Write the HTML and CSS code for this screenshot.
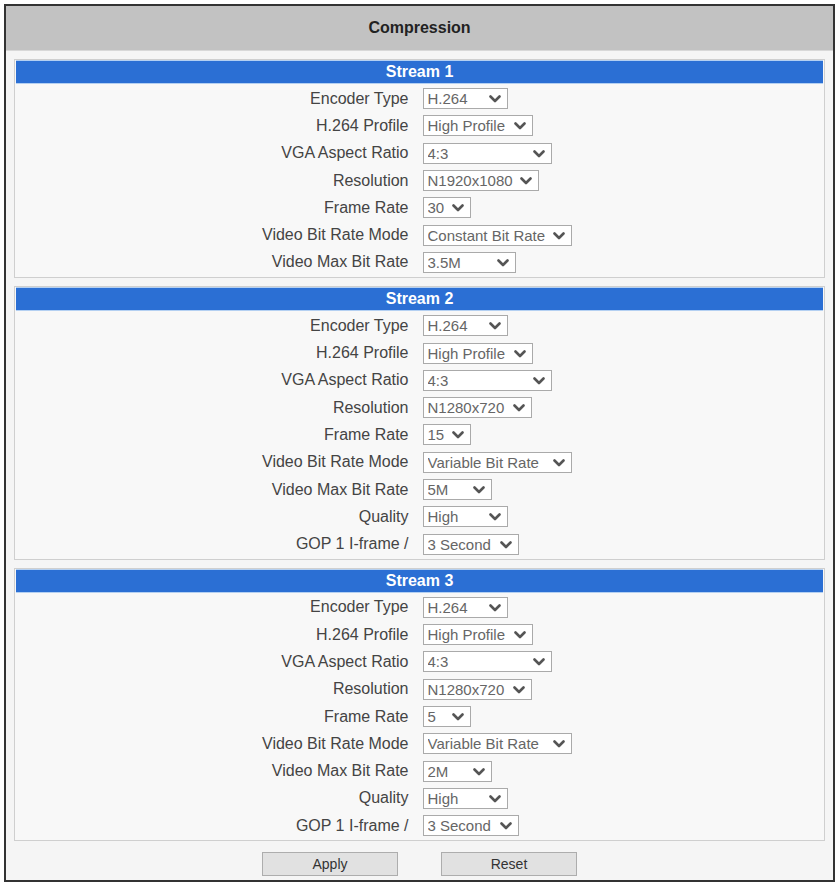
FILE: index.html
```html
<!DOCTYPE html>
<html lang="en">
<head>
    <meta charset="UTF-8">
    <title>Compression</title>
    <link rel="stylesheet" href="styles.css">
</head>
<body>
    <div class="panel">
        <div class="panel-title">Compression</div>
        <div class="panel-body">

            <div class="stream">
                <div class="stream-head">Stream 1</div>
                <div class="rows">
                    <div class="label">Encoder Type</div>
                    <div class="cell"><div class="select w85"><span>H.264</span><svg viewBox="0 0 12 8"><path d="M1.5 1.5 6 6 10.5 1.5"/></svg></div></div>
                    <div class="label">H.264 Profile</div>
                    <div class="cell"><div class="select w110"><span>High Profile</span><svg viewBox="0 0 12 8"><path d="M1.5 1.5 6 6 10.5 1.5"/></svg></div></div>
                    <div class="label">VGA Aspect Ratio</div>
                    <div class="cell"><div class="select w129"><span>4:3</span><svg viewBox="0 0 12 8"><path d="M1.5 1.5 6 6 10.5 1.5"/></svg></div></div>
                    <div class="label">Resolution</div>
                    <div class="cell"><div class="select w116"><span>N1920x1080</span><svg viewBox="0 0 12 8"><path d="M1.5 1.5 6 6 10.5 1.5"/></svg></div></div>
                    <div class="label">Frame Rate</div>
                    <div class="cell"><div class="select w48"><span>30</span><svg viewBox="0 0 12 8"><path d="M1.5 1.5 6 6 10.5 1.5"/></svg></div></div>
                    <div class="label">Video Bit Rate Mode</div>
                    <div class="cell"><div class="select w149"><span>Constant Bit Rate</span><svg viewBox="0 0 12 8"><path d="M1.5 1.5 6 6 10.5 1.5"/></svg></div></div>
                    <div class="label">Video Max Bit Rate</div>
                    <div class="cell"><div class="select w93"><span>3.5M</span><svg viewBox="0 0 12 8"><path d="M1.5 1.5 6 6 10.5 1.5"/></svg></div></div>
                </div>
            </div>

            <div class="stream">
                <div class="stream-head">Stream 2</div>
                <div class="rows">
                    <div class="label">Encoder Type</div>
                    <div class="cell"><div class="select w85"><span>H.264</span><svg viewBox="0 0 12 8"><path d="M1.5 1.5 6 6 10.5 1.5"/></svg></div></div>
                    <div class="label">H.264 Profile</div>
                    <div class="cell"><div class="select w110"><span>High Profile</span><svg viewBox="0 0 12 8"><path d="M1.5 1.5 6 6 10.5 1.5"/></svg></div></div>
                    <div class="label">VGA Aspect Ratio</div>
                    <div class="cell"><div class="select w129"><span>4:3</span><svg viewBox="0 0 12 8"><path d="M1.5 1.5 6 6 10.5 1.5"/></svg></div></div>
                    <div class="label">Resolution</div>
                    <div class="cell"><div class="select w109"><span>N1280x720</span><svg viewBox="0 0 12 8"><path d="M1.5 1.5 6 6 10.5 1.5"/></svg></div></div>
                    <div class="label">Frame Rate</div>
                    <div class="cell"><div class="select w48"><span>15</span><svg viewBox="0 0 12 8"><path d="M1.5 1.5 6 6 10.5 1.5"/></svg></div></div>
                    <div class="label">Video Bit Rate Mode</div>
                    <div class="cell"><div class="select w149"><span>Variable Bit Rate</span><svg viewBox="0 0 12 8"><path d="M1.5 1.5 6 6 10.5 1.5"/></svg></div></div>
                    <div class="label">Video Max Bit Rate</div>
                    <div class="cell"><div class="select w69"><span>5M</span><svg viewBox="0 0 12 8"><path d="M1.5 1.5 6 6 10.5 1.5"/></svg></div></div>
                    <div class="label">Quality</div>
                    <div class="cell"><div class="select w85"><span>High</span><svg viewBox="0 0 12 8"><path d="M1.5 1.5 6 6 10.5 1.5"/></svg></div></div>
                    <div class="label">GOP 1 I-frame /</div>
                    <div class="cell"><div class="select w96"><span>3 Second</span><svg viewBox="0 0 12 8"><path d="M1.5 1.5 6 6 10.5 1.5"/></svg></div></div>
                </div>
            </div>

            <div class="stream">
                <div class="stream-head">Stream 3</div>
                <div class="rows">
                    <div class="label">Encoder Type</div>
                    <div class="cell"><div class="select w85"><span>H.264</span><svg viewBox="0 0 12 8"><path d="M1.5 1.5 6 6 10.5 1.5"/></svg></div></div>
                    <div class="label">H.264 Profile</div>
                    <div class="cell"><div class="select w110"><span>High Profile</span><svg viewBox="0 0 12 8"><path d="M1.5 1.5 6 6 10.5 1.5"/></svg></div></div>
                    <div class="label">VGA Aspect Ratio</div>
                    <div class="cell"><div class="select w129"><span>4:3</span><svg viewBox="0 0 12 8"><path d="M1.5 1.5 6 6 10.5 1.5"/></svg></div></div>
                    <div class="label">Resolution</div>
                    <div class="cell"><div class="select w109"><span>N1280x720</span><svg viewBox="0 0 12 8"><path d="M1.5 1.5 6 6 10.5 1.5"/></svg></div></div>
                    <div class="label">Frame Rate</div>
                    <div class="cell"><div class="select w48"><span>5</span><svg viewBox="0 0 12 8"><path d="M1.5 1.5 6 6 10.5 1.5"/></svg></div></div>
                    <div class="label">Video Bit Rate Mode</div>
                    <div class="cell"><div class="select w149"><span>Variable Bit Rate</span><svg viewBox="0 0 12 8"><path d="M1.5 1.5 6 6 10.5 1.5"/></svg></div></div>
                    <div class="label">Video Max Bit Rate</div>
                    <div class="cell"><div class="select w69"><span>2M</span><svg viewBox="0 0 12 8"><path d="M1.5 1.5 6 6 10.5 1.5"/></svg></div></div>
                    <div class="label">Quality</div>
                    <div class="cell"><div class="select w85"><span>High</span><svg viewBox="0 0 12 8"><path d="M1.5 1.5 6 6 10.5 1.5"/></svg></div></div>
                    <div class="label">GOP 1 I-frame /</div>
                    <div class="cell"><div class="select w96"><span>3 Second</span><svg viewBox="0 0 12 8"><path d="M1.5 1.5 6 6 10.5 1.5"/></svg></div></div>
                </div>
            </div>

            <div class="actions">
                <button class="btn">Apply</button>
                <button class="btn">Reset</button>
            </div>
        </div>
    </div>
</body>
</html>
```

FILE: styles.css
```css
* {
    margin: 0;
    padding: 0;
    box-sizing: border-box;
}

body {
    background: #fff;
    font-family: "Liberation Sans", Arial, sans-serif;
    color: #444;
}

.panel {
    width: 831px;
    height: 878px;
    margin: 4px 0 0 4px;
    border: 2px solid #333;
    display: flex;
    flex-direction: column;
}

.panel-title {
    height: 45px;
    background: #c2c2c2;
    border-bottom: 1px solid #d8d8d8;
    display: flex;
    align-items: center;
    justify-content: center;
    font-size: 16px;
    font-weight: bold;
    color: #222;
}

.panel-body {
    flex: 1;
    background: #f5f5f5;
    padding: 8px 8px 0 8px;
}

.stream {
    border: 1px solid #cfcfcf;
    background: #f8f8f8;
    padding: 1px;
    margin-bottom: 8px;
}

.stream-head {
    height: 22px;
    background: #2b6fd4;
    box-shadow: 0 -1px 0 #b4d0f2, 0 1px 0 #b4d0f2;
    color: #fff;
    font-size: 16px;
    font-weight: bold;
    display: flex;
    align-items: center;
    justify-content: center;
}

.rows {
    display: grid;
    grid-template-columns: 1fr 1fr;
    grid-auto-rows: 27.3px;
    padding-top: 2px;
}

.label {
    display: flex;
    align-items: center;
    justify-content: flex-end;
    padding-right: 11px;
    font-size: 16px;
    color: #444;
}

.cell {
    display: flex;
    align-items: center;
    padding-left: 3px;
}

.select {
    height: 21px;
    background: #fff;
    border: 1px solid #aaa;
    display: flex;
    align-items: center;
    padding: 0 6px 0 4px;
    font-size: 15px;
    color: #666;
}

.select span {
    flex: 1;
    white-space: nowrap;
    overflow: hidden;
}

.select svg {
    width: 12px;
    height: 8px;
    fill: none;
    stroke: #555;
    stroke-width: 2.6;
    stroke-linecap: round;
    stroke-linejoin: round;
    margin-top: 1px;
}

.w48 { width: 48px; }
.w69 { width: 69px; }
.w85 { width: 85px; }
.w93 { width: 93px; }
.w96 { width: 96px; }
.w109 { width: 109px; }
.w110 { width: 110px; }
.w116 { width: 116px; }
.w129 { width: 129px; }
.w149 { width: 149px; }

.actions {
    display: flex;
    justify-content: center;
    gap: 43px;
    padding-top: 3px;
}

.btn {
    width: 136px;
    height: 24px;
    background: #e1e1e1;
    border: 1px solid #adadad;
    font-family: "Liberation Sans", Arial, sans-serif;
    font-size: 14px;
    color: #333;
}
```
